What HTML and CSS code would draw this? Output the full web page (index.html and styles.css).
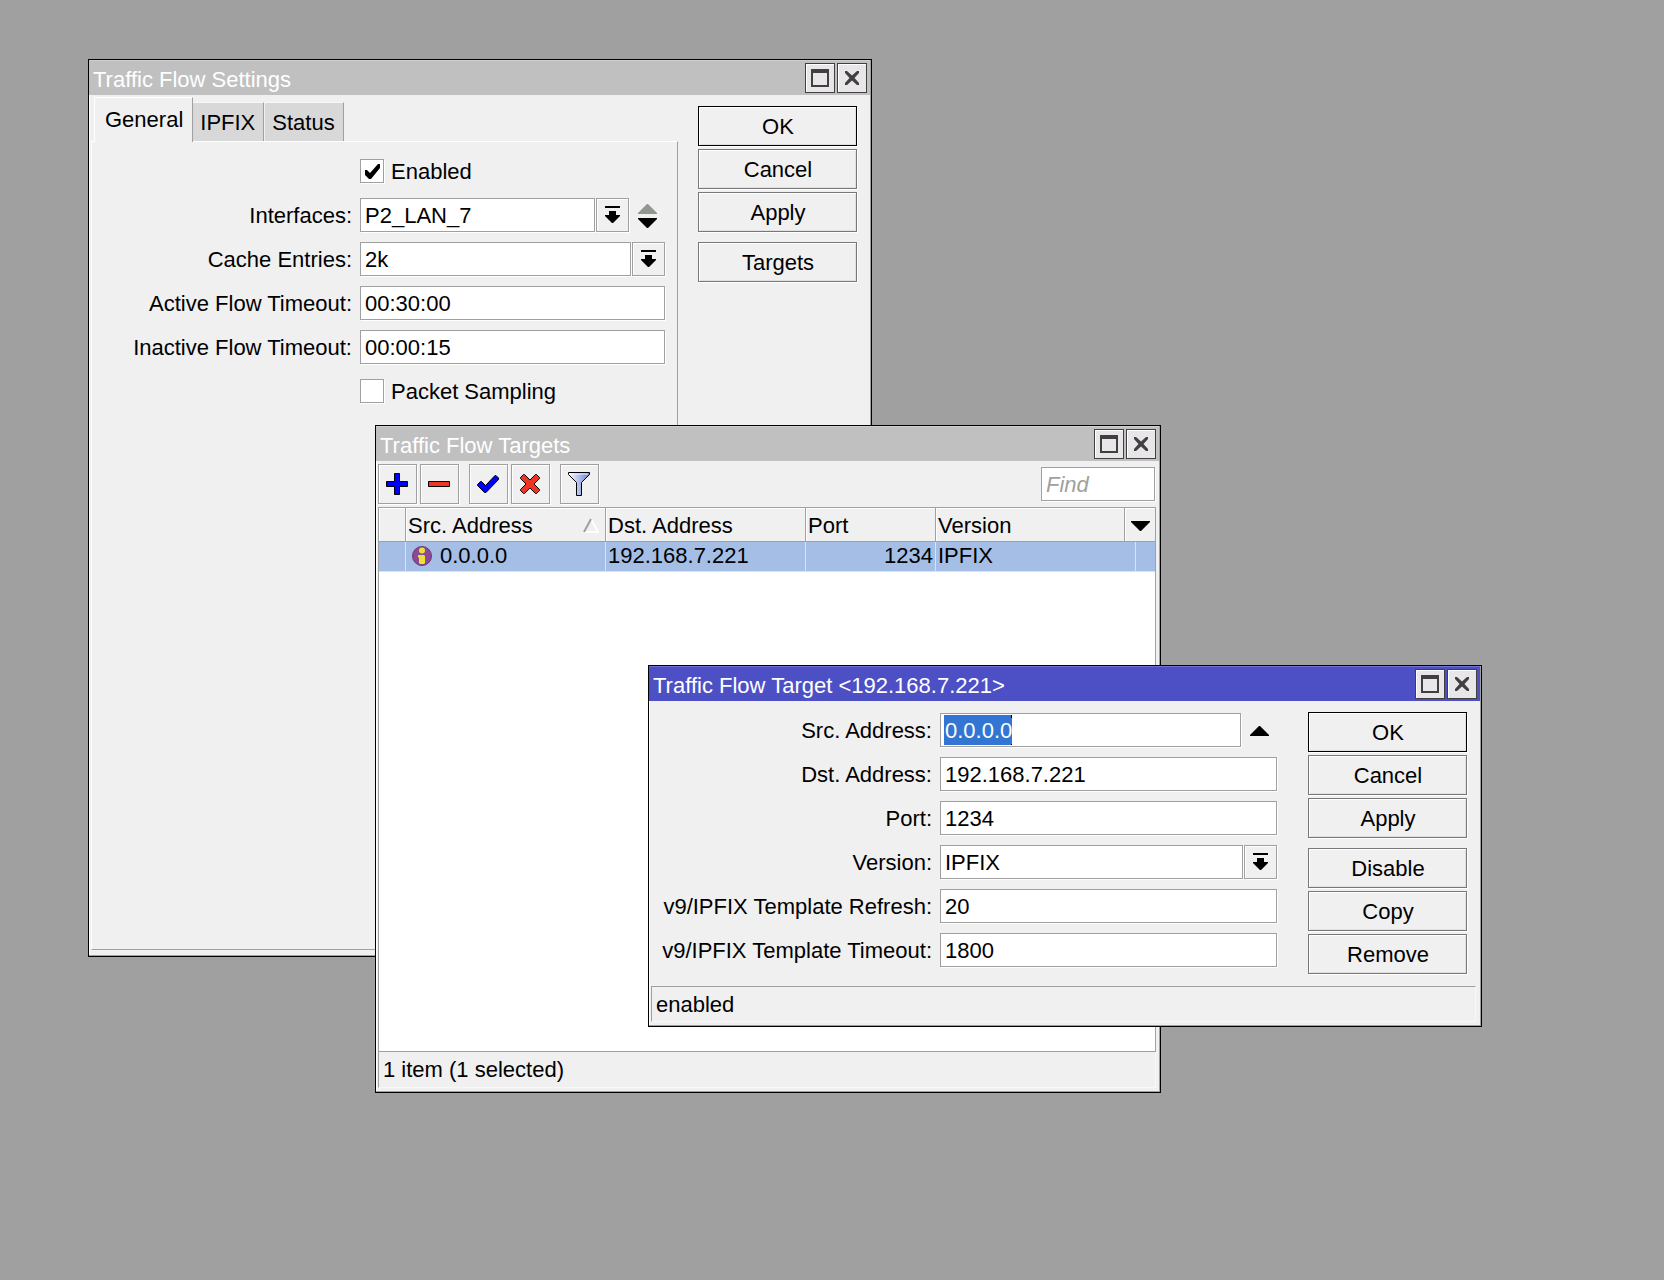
FILE: index.html
```html
<!DOCTYPE html>
<html lang="en">
<head>
<meta charset="utf-8">
<title>Traffic Flow</title>
<link rel="stylesheet" href="styles.css">
</head>
<body>
<svg class="sprites" aria-hidden="true">
  <symbol id="i-max" viewBox="0 0 18 18"><path fill="#404040" fill-rule="evenodd" d="M0 0h18v18H0zM2 4v12h14V4z"/></symbol>
  <symbol id="i-close" viewBox="0 0 14 14"><path fill="#404040" d="M0 0h2l5 4.500L12 0h2v2L9.500 7l4.500 5v2h-2L7 9.500 2 14H0v-2l4.500-5L0 2z"/></symbol>
  <symbol id="i-drop" viewBox="0 0 15 17"><path d="M0 0h15v2H0zM4 5h7v4h4v1l-7 7h-1l-7-7V9h4z"/></symbol>
  <symbol id="i-up" viewBox="0 0 19 10"><path fill="currentColor" d="M9 0h1l9 9v1H0V9z"/></symbol>
  <symbol id="i-down" viewBox="0 0 19 10"><path fill="currentColor" d="M0 0h19v1l-9 9H9L0 1z"/></symbol>
</svg>
<main class="desktop">

  <section class="window window-settings" aria-label="Traffic Flow Settings">
    <header class="titlebar">
      <h2>Traffic Flow Settings</h2>
      <button class="title-btn" aria-label="Maximize"><svg width="18" height="18"><use href="#i-max"/></svg></button>
      <button class="title-btn" aria-label="Close"><svg width="14" height="14"><use href="#i-close"/></svg></button>
    </header>
    <div class="body">
      <div class="tabbed">
        <div class="tabs" role="tablist">
          <button class="tab active" role="tab" aria-selected="true">General</button>
          <button class="tab" role="tab" aria-selected="false">IPFIX</button>
          <button class="tab" role="tab" aria-selected="false">Status</button>
        </div>
        <div class="panel" role="tabpanel">
          <div class="form">
            <span></span>
            <label class="check"><input type="checkbox" checked><span>Enabled</span></label>
            <label for="ifaces">Interfaces:</label>
            <div class="field">
              <select id="ifaces"><option>P2_LAN_7</option></select>
              <button class="drop" aria-label="Choose interface"><svg width="15" height="17"><use href="#i-drop"/></svg></button>
              <span class="spin">
                <button class="arrow dim" aria-label="Remove interface"><svg width="19" height="10"><use href="#i-up"/></svg></button>
                <button class="arrow" aria-label="Add interface"><svg width="19" height="10"><use href="#i-down"/></svg></button>
              </span>
            </div>
            <label for="cache">Cache Entries:</label>
            <div class="field">
              <select id="cache"><option>2k</option></select>
              <button class="drop" aria-label="Choose cache size"><svg width="15" height="17"><use href="#i-drop"/></svg></button>
            </div>
            <label for="active">Active Flow Timeout:</label>
            <div class="field"><input id="active" type="text" value="00:30:00"></div>
            <label for="inactive">Inactive Flow Timeout:</label>
            <div class="field"><input id="inactive" type="text" value="00:00:15"></div>
            <span></span>
            <label class="check"><input type="checkbox"><span>Packet Sampling</span></label>
          </div>
        </div>
      </div>
      <div class="actions">
        <button class="default">OK</button>
        <button>Cancel</button>
        <button>Apply</button>
        <button class="apart">Targets</button>
      </div>
    </div>
  </section>

  <section class="window window-targets" aria-label="Traffic Flow Targets">
    <header class="titlebar">
      <h2>Traffic Flow Targets</h2>
      <button class="title-btn" aria-label="Maximize"><svg width="18" height="18"><use href="#i-max"/></svg></button>
      <button class="title-btn" aria-label="Close"><svg width="14" height="14"><use href="#i-close"/></svg></button>
    </header>
    <div class="toolbar">
      <button class="tool" aria-label="Add"><svg width="22" height="22" viewBox="0 0 22 22"><path fill="#00f" stroke="#000" d="M8.500 .5h5v8h8v5h-8v8h-5v-8h-8v-5h8z"/></svg></button>
      <button class="tool" aria-label="Remove"><svg width="22" height="6" viewBox="0 0 22 6"><path fill="#ee3524" stroke="#000" d="M.5.5h21v5H.5z"/></svg></button>
      <button class="tool apart" aria-label="Enable"><svg width="22" height="18" viewBox="0 0 22 18"><path fill="#00f" stroke="#000" d="M.5 10.500v-1l3-3h1l4 4 9.500-10h1l2.500 2.500v1.500L9 17.500H7.500z"/></svg></button>
      <button class="tool" aria-label="Disable"><svg width="20" height="20" viewBox="0 0 20 20"><path fill="#ee3524" stroke="#000" d="M3.500.5h1L10 6l5.500-5.500h1l3 3v1L14 10l5.500 5.500v1l-3 3h-1L10 14l-5.500 5.500h-1l-3-3v-1L6 10 .5 4.500v-1z"/></svg></button>
      <button class="tool apart" aria-label="Filter">
        <svg width="22" height="24" viewBox="0 0 22 24">
          <defs><linearGradient id="funnel"><stop offset="0" stop-color="#fff"/><stop offset=".55" stop-color="#a9b8ea"/><stop offset="1" stop-color="#6d7fc8"/></linearGradient></defs>
          <path fill="url(#funnel)" stroke="#000" d="M.5.5h21v2l-8 8v13h-5v-13l-8-8z"/><path stroke="#eef2ff" d="M2 2h18"/>
        </svg>
      </button>
      <input class="find" type="text" placeholder="Find" aria-label="Find">
    </div>
    <div class="list">
      <table>
        <colgroup><col class="c-flag"><col class="c-addr"><col class="c-addr"><col class="c-port"><col class="c-version"><col class="c-extra"><col class="c-end"></colgroup>
        <thead>
          <tr>
            <th></th>
            <th><span class="sorted">Src. Address<svg width="16" height="15" viewBox="0 0 16 15"><path fill="none" stroke="#fff" stroke-width="2" d="M8 1l7 13H1"/><path fill="none" stroke="#a0a0a0" stroke-width="2" d="M1 14L8 1"/></svg></span></th>
            <th>Dst. Address</th>
            <th>Port</th>
            <th>Version</th>
            <th colspan="2" class="menu"><button class="arrow" aria-label="Columns"><svg width="19" height="10"><use href="#i-down"/></svg></button></th>
          </tr>
        </thead>
        <tbody>
          <tr>
            <td></td>
            <td><span class="target"><svg width="20" height="20" viewBox="0 0 20 20"><circle cx="10" cy="10" r="9.500" fill="#8f4798" stroke="#6d3a78"/><circle cx="10" cy="4.500" r="3" fill="#e8e337"/><path fill="#e8e337" d="M7 9h5l1 1v7l-1 1H8l-1-1v-5l-1-1v-2z"/></svg>0.0.0.0</span></td>
            <td>192.168.7.221</td>
            <td class="num">1234</td>
            <td colspan="2">IPFIX</td>
            <td></td>
          </tr>
        </tbody>
      </table>
    </div>
    <footer class="status joined">1 item (1 selected)</footer>
  </section>

  <section class="window window-target" aria-label="Traffic Flow Target">
    <header class="titlebar current">
      <h2>Traffic Flow Target &lt;192.168.7.221&gt;</h2>
      <button class="title-btn" aria-label="Maximize"><svg width="18" height="18"><use href="#i-max"/></svg></button>
      <button class="title-btn" aria-label="Close"><svg width="14" height="14"><use href="#i-close"/></svg></button>
    </header>
    <div class="body">
      <div class="form">
        <label for="src">Src. Address:</label>
        <div class="field">
          <input id="src" class="selected" type="text" value="0.0.0.0">
          <span class="spin"><button class="arrow" aria-label="Clear source address"><svg width="19" height="10"><use href="#i-up"/></svg></button></span>
        </div>
        <label for="dst">Dst. Address:</label>
        <div class="field"><input id="dst" type="text" value="192.168.7.221"></div>
        <label for="port">Port:</label>
        <div class="field"><input id="port" type="text" value="1234"></div>
        <label for="version">Version:</label>
        <div class="field">
          <select id="version"><option>IPFIX</option></select>
          <button class="drop" aria-label="Choose version"><svg width="15" height="17"><use href="#i-drop"/></svg></button>
        </div>
        <label for="refresh">v9/IPFIX Template Refresh:</label>
        <div class="field"><input id="refresh" type="text" value="20"></div>
        <label for="timeout">v9/IPFIX Template Timeout:</label>
        <div class="field"><input id="timeout" type="text" value="1800"></div>
      </div>
      <div class="actions">
        <button class="default">OK</button>
        <button>Cancel</button>
        <button>Apply</button>
        <button class="apart">Disable</button>
        <button>Copy</button>
        <button>Remove</button>
      </div>
    </div>
    <footer class="status">enabled</footer>
  </section>

</main>
<script src="script.js"></script>
</body>
</html>
```
FILE: styles.css
```css
* { box-sizing: border-box; }

body {
  margin: 0;
  background: #a0a0a0;
  color: #000;
  font: 22px/26px "Liberation Sans", Arial, sans-serif;
}

button, input, select {
  margin: 0;
  border-radius: 0;
  color: inherit;
  font: inherit;
}

svg { display: block; }
.sprites { display: none; }

.desktop {
  position: relative;
  min-height: 100vh;
  overflow: hidden;
}

/* Windows */
.window {
  position: absolute;
  display: flex;
  flex-direction: column;
  border: 1px solid #000;
  background: #f0f0f0;
  box-shadow: inset -1px -1px #a0a0a0, inset 1px 1px #fff;
}
.window-settings { left: 88px; top: 59px; width: 784px; min-height: 898px; }
.window-targets { left: 375px; top: 425px; width: 786px; min-height: 668px; }
.window-target { left: 648px; top: 665px; width: 834px; }

.titlebar {
  display: flex;
  gap: 2px;
  height: 35px;
  margin-right: 1px;
  padding: 3px 3px 2px 4px;
  background: #c0c0c0;
  box-shadow: inset 0 1px #d0d0d0;
  color: #fff;
}
.titlebar.current { background: #4d50c5; box-shadow: inset 0 1px #7073d4; }
.titlebar h2 {
  flex: 1;
  margin: 0;
  font-size: 22px;
  font-weight: normal;
  line-height: 34px;
}
.title-btn {
  display: grid;
  place-items: center;
  width: 30px;
  height: 30px;
  padding: 0;
  border: 1px solid #404040;
  background: #e8e6e8;
  box-shadow: inset 1px 1px #fff;
}

.body { display: flex; flex: 1; }

/* Tabs */
.tabbed {
  display: flex;
  flex: 1;
  flex-direction: column;
  margin: 2px 0 6px 2px;
}
.tabs {
  display: flex;
  align-items: flex-end;
  height: 44px;
  padding-left: 3px;
}
.tab {
  height: 39px;
  padding: 2px 8px 0 7px;
  border: 0;
  border-top: 1px solid #f8f8f8;
  border-right: 1px solid #a0a0a0;
  background: #d8d8d8;
}
.tab + .tab + .tab { margin-left: 1px; }
.tab.active {
  z-index: 1;
  height: 45px;
  margin-bottom: -1px;
  padding: 0 9px 0 10px;
  border-top-color: #fff;
  border-left: 1px solid #fff;
  background: #f0f0f0;
}
.panel {
  flex: 1;
  padding: 12px 12px 12px 0;
  border: 1px solid #fff;
  border-right-color: #a0a0a0;
  border-bottom-color: #a0a0a0;
}

/* Forms */
.form {
  display: grid;
  flex: 1;
  grid-template-columns: 1fr 305px;
  grid-auto-rows: 34px;
  gap: 10px 8px;
  align-items: center;
}
.form label { padding-top: 2px; text-align: right; white-space: nowrap; }
.form .check {
  display: flex;
  align-items: center;
  gap: 7px;
  padding: 0;
}
.check span { padding-top: 2px; }
.field { display: flex; gap: 1px; }

input[type="text"], select {
  flex: 1;
  min-width: 0;
  height: 34px;
  padding: 2px 0 0 4px;
  border: 1px solid #a0a0a0;
  outline: 0;
  background: #fff;
  box-shadow: 1px 1px #fff;
  appearance: none;
}
input::selection { background: #3375d2; color: #fff; }

/* Selection block fills the field's height and ends in the caret */
input.selected:focus {
  background:
    linear-gradient(#000, #000) 70px 1px / 1px 30px no-repeat,
    linear-gradient(#3375d2, #3375d2) 3px 1px / 67px 30px no-repeat,
    #fff;
}

input[type="checkbox"] {
  width: 24px;
  height: 24px;
  padding: 4px;
  border: 1px solid #a0a0a0;
  background: #fff;
  box-shadow: 1px 1px #fff;
  appearance: none;
}
input[type="checkbox"]:checked::before {
  display: block;
  width: 15px;
  height: 15px;
  background: #000;
  clip-path: polygon(0 6px, 2px 6px, 5px 9px, 13px 0, 15px 0, 15px 4px, 6px 15px, 4px 15px, 0 11px);
  content: "";
}

.drop {
  display: grid;
  place-items: center;
  width: 33px;
  height: 34px;
  padding: 0 0 1px;
  border: 1px solid #a0a0a0;
  background: #f0f0f0;
  box-shadow: inset 1px 1px #fff, 1px 1px #fff;
}
.spin {
  display: flex;
  flex-direction: column;
  justify-content: center;
  gap: 4px;
  padding: 1px 8px 0;
}
.arrow { padding: 0; border: 0; background: none; }
.arrow.dim { color: #909690; }

/* Command buttons */
.actions {
  display: flex;
  flex-direction: column;
  gap: 3px;
  width: 159px;
  margin: 11px 14px 0 20px;
}
.actions button {
  height: 40px;
  padding: 2px 0 0 1px;
  border: 1px solid #787878;
  background: #f0f0f0;
  box-shadow: inset 1px 1px #fff, inset -1px -1px #e0e0e0, 1px 1px #fff;
}
.actions .default { border-color: #000; }
.actions .apart { margin-top: 7px; }

.window-target .form {
  grid-template-columns: 1fr 337px;
  margin-top: 12px;
}
.window-target .actions { margin: 11px 14px 12px 31px; }

/* Targets list */
.toolbar {
  display: flex;
  gap: 3px;
  padding: 3px 5px 3px 2px;
}
.tool {
  display: grid;
  place-items: center;
  width: 39px;
  height: 40px;
  padding: 0 2px 0 0;
  border: 1px solid #a0a0a0;
  background: #f0f0f0;
  box-shadow: inset 1px 1px #fff, 1px 1px #fff;
}
.tool.apart { margin-left: 7px; }
.toolbar .find {
  flex: none;
  align-self: center;
  width: 114px;
  margin-left: auto;
}
.find::placeholder { color: #a0a0a0; font-style: italic; opacity: 1; }

.list {
  flex: 1;
  margin: 0 4px 0 2px;
  border: 1px solid #a0a0a0;
  background: #fff;
}
table {
  width: 100%;
  border-spacing: 0;
  table-layout: fixed;
}
.c-flag { width: 27px; }
.c-addr { width: 200px; }
.c-port { width: 130px; }
.c-extra { width: 11px; }
.c-end { width: 19px; }
th, td {
  padding: 0 2px;
  text-align: left;
  white-space: nowrap;
}
th {
  height: 34px;
  padding-top: 2px;
  border-right: 1px solid #a0a0a0;
  border-bottom: 1px solid #a0a0a0;
  background: #f0f0f0;
  box-shadow: inset 1px 1px #fff;
  font-weight: normal;
}
td {
  height: 30px;
  padding-bottom: 2px;
  border-right: 1px solid #d8e2f2;
  border-bottom: 1px solid #d8e2f2;
  background: #a4bee6;
}
th:last-child, td:last-child { border-right: 0; }
.menu .arrow { display: block; margin: 0 auto; }
.num { text-align: right; }
.sorted {
  display: flex;
  align-items: center;
  justify-content: space-between;
  padding-right: 4px;
}
.target {
  display: flex;
  align-items: center;
  gap: 8px;
  padding-left: 4px;
}

/* Status line */
.status {
  height: 36px;
  margin: 0 5px 4px 2px;
  padding: 5px 4px 0;
  border: 1px solid #f8f8f8;
  border-top-color: #a0a0a0;
  border-left-color: #a0a0a0;
}
.status.joined {
  margin-right: 4px;
  border-top: 0;
}
```
FILE: script.js
```js
// The first field of the front window starts with its value selected.
const first = document.getElementById("src");
first.focus();
first.select();
```
